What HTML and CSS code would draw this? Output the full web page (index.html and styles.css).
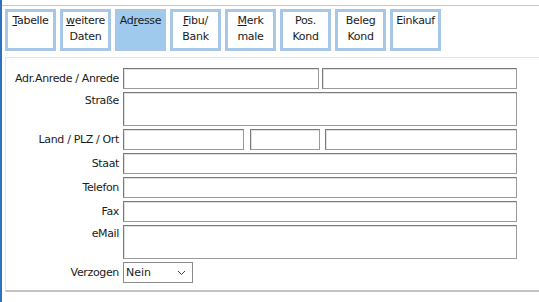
FILE: index.html
```html
<!DOCTYPE html>
<html lang="de">
<head>
    <meta charset="UTF-8">
    <title>Adresse</title>
    <link rel="stylesheet" href="styles.css">
</head>
<body>
    <div class="window">
        <!-- Reiter -->
        <div class="tabs">
            <div class="tab"><u>T</u>abelle</div>
            <div class="tab"><u>w</u>eitere<br>Daten</div>
            <div class="tab active">Ad<u>r</u>esse</div>
            <div class="tab"><u>F</u>ibu/<br>Bank</div>
            <div class="tab"><u>M</u>erk<br>male</div>
            <div class="tab">Pos.<br>Kond</div>
            <div class="tab">Beleg<br>Kond</div>
            <div class="tab">Einkauf</div>
        </div>

        <!-- Adressfelder -->
        <div class="panel">
            <div class="row">
                <label class="lbl">Adr.Anrede / Anrede</label>
                <div class="fields">
                    <input class="inp w196" type="text">
                    <input class="inp grow" type="text">
                </div>
            </div>
            <div class="row tall">
                <label class="lbl top">Straße</label>
                <div class="fields"><textarea class="inp grow"></textarea></div>
            </div>
            <div class="row">
                <label class="lbl">Land / PLZ / Ort</label>
                <div class="fields">
                    <input class="inp w121" type="text">
                    <input class="inp w70 gap6" type="text">
                    <input class="inp grow gap5" type="text">
                </div>
            </div>
            <div class="row">
                <label class="lbl">Staat</label>
                <div class="fields"><input class="inp grow" type="text"></div>
            </div>
            <div class="row">
                <label class="lbl">Telefon</label>
                <div class="fields"><input class="inp grow" type="text"></div>
            </div>
            <div class="row">
                <label class="lbl">Fax</label>
                <div class="fields"><input class="inp grow" type="text"></div>
            </div>
            <div class="row tall">
                <label class="lbl top">eMail</label>
                <div class="fields"><textarea class="inp grow"></textarea></div>
            </div>
            <div class="row">
                <label class="lbl">Verzogen</label>
                <div class="fields">
                    <div class="select">
                        <span>Nein</span>
                        <svg width="9" height="6" viewBox="0 0 9 6"><path d="M1 1 L4.5 4.5 L8 1" fill="none" stroke="#444" stroke-width="1"/></svg>
                    </div>
                </div>
            </div>
        </div>
    </div>
</body>
</html>
```

FILE: styles.css
```css
/* Grundlayout */
body, html {
    margin: 0;
    padding: 0;
    height: 100%;
    overflow: hidden;
    background: #ffffff;
    font-family: "DejaVu Sans", Verdana, sans-serif;
    font-size: 11px;
    color: #1a1a1a;
}

.window {
    height: 302px;
    border-left: 2px solid #2b73c0;
    box-sizing: border-box;
    padding-top: 5px;
}

/* Reiterleiste */
.tabs {
    display: flex;
    gap: 4px;
    padding: 3px 0 0 3px;
    border-top: 1px solid #c8c8c8;
    height: 46px;
    box-sizing: border-box;
}

.tab {
    width: 51px;
    height: 42px;
    box-sizing: border-box;
    border: 3px solid #a6c8e6;
    background: #ffffff;
    text-align: center;
    line-height: 16px;
    padding-top: 1px;
    letter-spacing: -0.3px;
}

.tab.active {
    background: #9fcaee;
}

/* Formularbereich */
.panel {
    margin: 6px 0 0 3px;
    border-top: 1px solid #e4e4e4;
    border-left: 1px solid #e4e4e4;
    padding-top: 10px;
    height: 235px;
    box-sizing: border-box;
    border-bottom: 2px solid #c4c4c4;
}

.row {
    display: flex;
    height: 21px;
    margin-bottom: 3px;
}

.row.tall {
    height: 34px;
}

.lbl {
    width: 113px;
    flex: none;
    text-align: right;
    line-height: 21px;
    padding-right: 4px;
    letter-spacing: -0.35px;
}

.lbl.top {
    line-height: 17px;
}

.fields {
    display: flex;
    width: 394px;
    gap: 3px;
}

.inp {
    box-sizing: border-box;
    height: 100%;
    margin: 0;
    border: 1px solid #7a7a7a;
    border-right-color: #9a9a9a;
    border-bottom-color: #9a9a9a;
    box-shadow: inset 1px 1px 0 #e0e0e0;
    background: #ffffff;
    resize: none;
    padding: 0;
    font: inherit;
}

.grow { flex: 1; }
.w196 { width: 196px; flex: none; }
.w121 { width: 121px; flex: none; }
.w70 { width: 70px; flex: none; }
.gap6 { margin-left: 3px; }
.gap5 { margin-left: 2px; }

.select {
    width: 70px;
    height: 21px;
    box-sizing: border-box;
    border: 1px solid #8a8a8a;
    display: flex;
    align-items: center;
    justify-content: space-between;
    padding: 0 6px 0 2px;
    font-size: 11px;
    font-family: "DejaVu Sans", Verdana, sans-serif;
}
```
